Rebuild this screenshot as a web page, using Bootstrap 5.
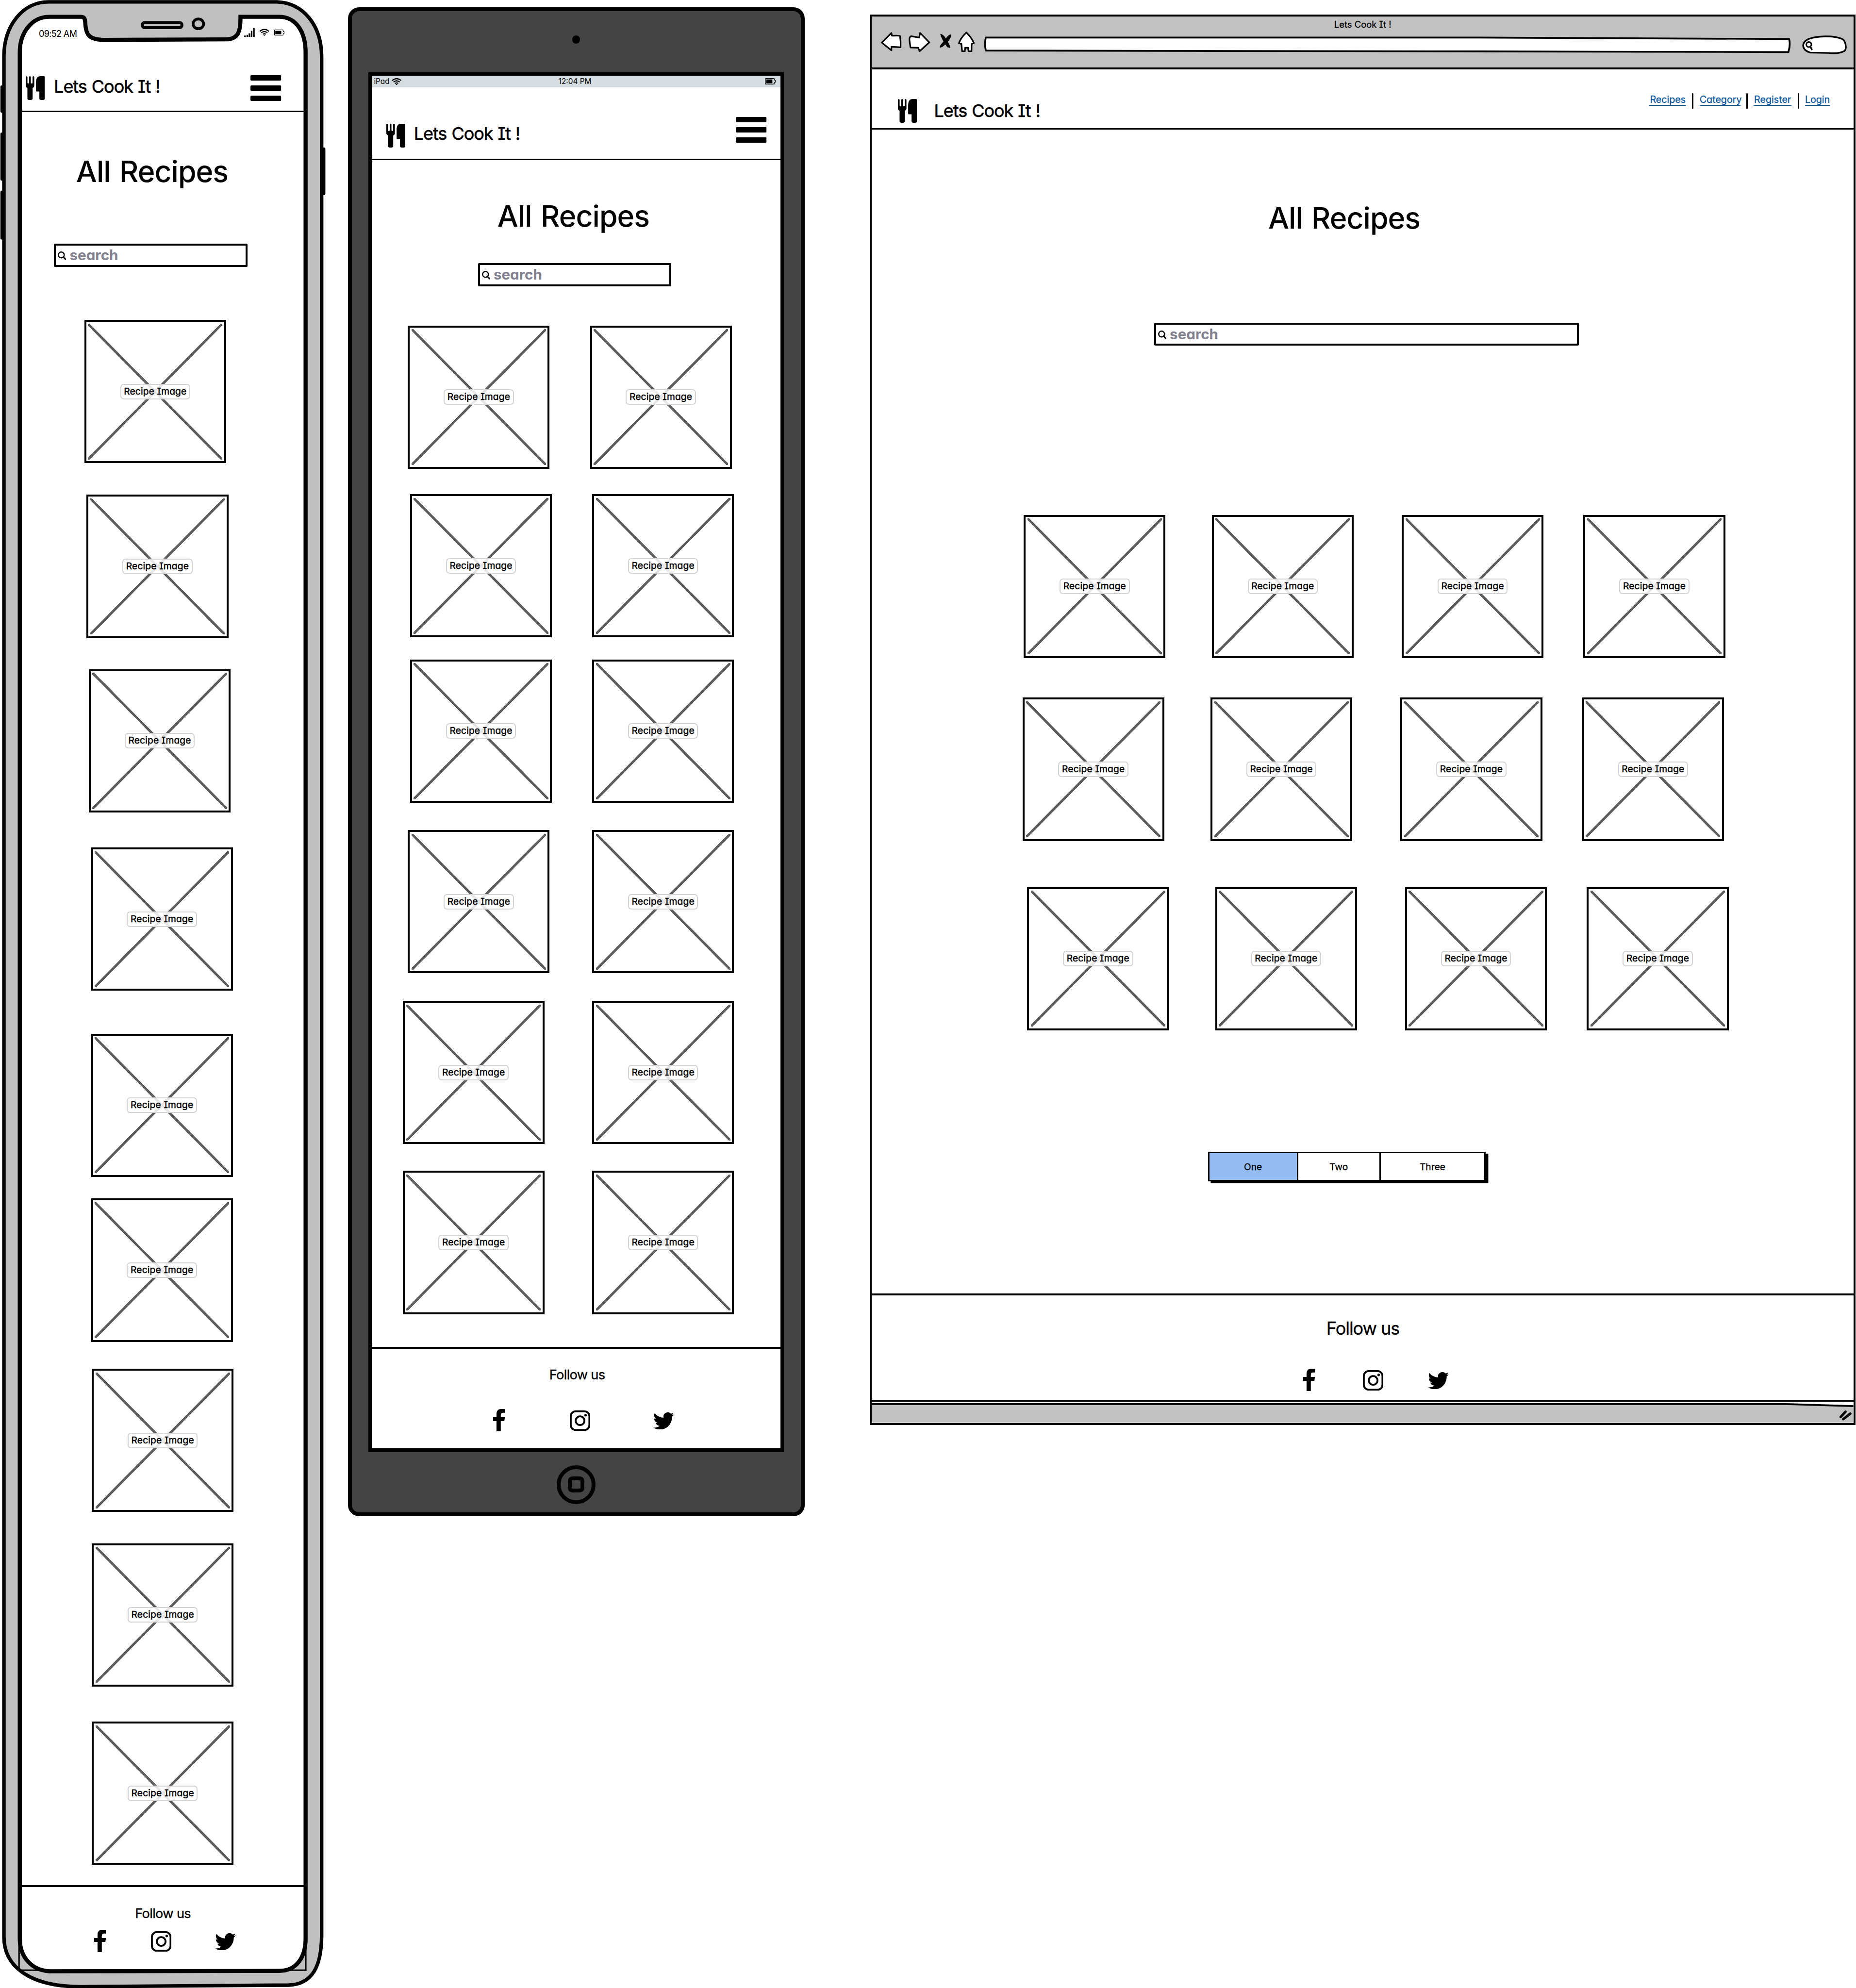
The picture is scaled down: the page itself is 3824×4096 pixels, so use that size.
<!DOCTYPE html>
<html lang="en">
<head>
<meta charset="utf-8">
<title>Lets Cook It ! – wireframes</title>
<link href="https://cdn.jsdelivr.net/npm/bootstrap@5.3.0/dist/css/bootstrap.min.css" rel="stylesheet">
<style>
/* 1rem = 10 canvas units */
html{font-size:7.688px}
body{font-family:Inter,"Open Sans",sans-serif;font-feature-settings:"cv08","cv11";color:#000;background:#fff;line-height:1.21;overflow:hidden;white-space:nowrap}
svg{display:block;flex:none}
.board{width:497.4rem;height:532.8rem}
/* shared wireframe parts */
.site-name{font-size:4.68rem;font-weight:400;letter-spacing:-.13rem;word-spacing:.12rem;-webkit-text-stroke:.08rem #000}
.page-title{font-size:7.9rem;font-weight:500;line-height:9.6rem;height:9.6rem;margin:0;padding-top:.2rem;letter-spacing:-.12rem;word-spacing:.4rem}
.search-box{height:6.2rem;border:4px solid #000;border-radius:.3rem;background:#fff;padding:.25rem 0 0 .5rem}
.search-box svg{width:2.25rem;height:2.3rem;margin-top:1.35rem}
.search-box span{font-size:3.85rem;line-height:4.5rem;font-weight:700;color:#81818f;margin-left:.9rem}
.tile{width:38rem;height:38.4rem;margin:0;flex:none;border:4px solid #000;padding:.45rem;
 background:linear-gradient(to top right,transparent calc(50% - .37rem),#5c5c5c calc(50% - .3rem),#5c5c5c calc(50% + .3rem),transparent calc(50% + .37rem)) content-box,
 linear-gradient(to bottom right,transparent calc(50% - .37rem),#5c5c5c calc(50% - .3rem),#5c5c5c calc(50% + .3rem),transparent calc(50% + .37rem)) content-box}
.tile span{width:18.8rem;height:4.15rem;border:2px solid #d3d3d3;border-radius:.9rem;background:rgba(255,255,255,.85);font-size:2.5rem;line-height:3.55rem;letter-spacing:.02rem;text-align:center;-webkit-text-stroke:.06rem #000}
.burger{width:8.25rem;height:6.9rem}
.cutlery{width:5.1rem;height:6.4rem}
.follow{font-size:3.55rem;line-height:4.3rem;letter-spacing:-.09rem;-webkit-text-stroke:.05rem #000}
.ico-f{width:3.2rem;height:6rem}
.ico-i{width:5.5rem;height:5.5rem;margin-top:.45rem}
.ico-t{width:5.6rem;height:4.6rem;margin-top:.9rem}

/* phone */
.phone{width:87.3rem;height:532.8rem}
.phone .shell{width:87.3rem;height:532.8rem;z-index:0}
.phone .content{z-index:1}
.phone .status{height:20.2rem;padding:7.7rem 11.1rem 0 10.4rem;font-size:2.34rem;letter-spacing:-.08rem}
.phone .status svg{width:10.8rem;height:2.4rem;margin-top:-.2rem}
.phone .top{height:9.9rem;margin:0 5.7rem 0 5.7rem;padding:0 6.2rem 0 1.25rem;border-bottom:.4rem solid #000}
.phone .top .cutlery{margin-top:.2rem}
.phone .top .site-name{margin:.2rem 0 0 2.4rem}
.phone .page-title{margin:10.9rem 0 0 20.4rem}
.phone .search-box{margin:14.7rem 0 0 14.5rem;width:51.8rem}
.phone .tile:nth-child(1){margin:14.25rem 0 0 22.6rem}
.phone .tile:nth-child(2){margin:8.45rem 0 0 23.2rem}
.phone .tile:nth-child(3){margin:8.35rem 0 0 23.8rem}
.phone .tile:nth-child(4){margin:9.4rem 0 0 24.4rem}
.phone .tile:nth-child(5){margin:11.45rem 0 0 24.4rem}
.phone .tile:nth-child(6){margin:5.8rem 0 0 24.4rem}
.phone .tile:nth-child(7){margin:7.25rem 0 0 24.6rem}
.phone .tile:nth-child(8){margin:8.35rem 0 0 24.6rem}
.phone .tile:nth-child(9){margin:9.4rem 0 0 24.6rem}
.phone footer{margin:5.4rem 5.7rem 0;border-top:4px solid #000;padding-top:4.9rem}
.phone .follow{padding-left:30.5rem}
.phone .social{padding:2.25rem 0 0 19.5rem}
.phone .ico-i{margin-left:12rem}.phone .ico-t{margin-left:11.7rem}

/* tablet */
.tablet{width:122.4rem;height:404.4rem;margin:2rem 0 0 5.9rem;border:8px solid #000;border-radius:3rem;background:#444}
.cam{width:2.2rem;height:2.2rem;margin-top:6.5rem;background:#000}
.screen{width:111.4rem;height:369.8rem;margin-top:7.6rem;border:7px solid #000;border-bottom-width:8px;background:#fff}
.tablet .status{height:3.2rem;background:#d5dde0;font-size:2rem;padding:0 1.25rem 0 .6rem}
.tablet .status>*{flex:1 1 0}
.tablet .wifi{width:2.65rem;height:1.9rem;margin-left:.6rem}
.tablet .batt{width:2.9rem;height:1.7rem}
.tablet .top{height:19.5rem;border-bottom:.4rem solid #000;padding:0 3.7rem 0 3.9rem}
.tablet .top .cutlery{margin-bottom:3rem}
.tablet .top .site-name{margin:0 0 3.85rem 2.3rem}
.tablet .top .burger{margin-bottom:4.3rem}
.tablet .page-title{margin:10.1rem 0 0 33.7rem}
.tablet .search-box{margin:7.85rem 0 0 28.5rem;width:51.8rem}
.tablet .tiles-row:nth-child(1){margin:10.55rem 0 0 9.7rem;gap:10.8rem}
.tablet .tiles-row:nth-child(2){margin:6.8rem 0 0 10.3rem;gap:10.8rem}
.tablet .tiles-row:nth-child(3){margin:5.9rem 0 0 10.3rem;gap:10.8rem}
.tablet .tiles-row:nth-child(4){margin:7.3rem 0 0 9.7rem;gap:11.4rem}
.tablet .tiles-row:nth-child(5){margin:7.4rem 0 0 8.3rem;gap:12.8rem}
.tablet .tiles-row:nth-child(6){margin:7.15rem 0 0 8.3rem;gap:12.8rem}
.tablet footer{margin-top:8.75rem;border-top:4px solid #000;padding-top:4.85rem}
.tablet .follow{padding-left:47.6rem}
.tablet .social{padding:7rem 0 0 32.5rem}
.tablet .ico-i{margin-left:17.4rem}.tablet .ico-t{margin-left:16.9rem}
.home-key{width:10.4rem;height:10.4rem;margin-top:3.5rem;border:8px solid #000}
.home-key i{width:4.3rem;height:4.4rem;border:8px solid #000;border-radius:1.2rem}

/* browser */
.browser{width:264.1rem;height:377.95rem;margin:3.9rem 0 0 17.55rem;border:4px solid #000;background:#fff}
.chrome{height:14.2rem;background:#c1c1c1;border-bottom:4px solid #000}
.win-title{font-size:2.4rem;line-height:2.9rem;padding-top:.7rem;height:4rem;text-align:center;-webkit-text-stroke:.04rem #000}
.b-back{width:5.8rem;height:5.6rem;margin-left:2.35rem}
.b-fwd{width:6rem;height:5.6rem;margin-left:1.7rem}
.b-stop{width:3.8rem;height:5rem;margin-left:2rem}
.b-home{width:4.8rem;height:5.6rem;margin-left:1.2rem}
.b-url{width:216.2rem;height:4.5rem;margin-left:2.5rem;margin-top:1.4rem}
.b-find{width:12rem;height:5.1rem;margin-left:2.9rem;margin-top:1.1rem}
.browser .top{height:16.15rem;border-bottom:.4rem solid #000;padding:0 6.4rem 0 6.95rem}
.browser .top .cutlery{margin-top:7.9rem}
.browser .top .site-name{margin:8.26rem 0 0 4.6rem}
.links{margin-top:6.3rem;gap:1.6rem}
.links a{font-size:2.56rem;line-height:2.9rem;height:3.4rem;padding-top:.3rem;color:#08569b;border-bottom:2px solid #08569b;text-align:center;-webkit-text-stroke:.04rem #08569b}
.links i{width:.4rem;height:4.2rem;background:#000;border-radius:.2rem}
.w1{width:9.84rem}.w2{width:10.9rem}.w3{width:10.15rem}.w4{width:6.6rem}
.browser .page-title{margin:18.8rem 0 0 106.2rem}
.browser .search-box{margin:23.3rem 0 0 75.65rem;width:113.75rem}
.browser .tile:nth-child(2){margin-left:12.4rem}
.browser .tile:nth-child(3){margin-left:12.9rem}
.browser .tile:nth-child(4){margin-left:10.7rem}
.browser .tiles-row:nth-child(1){margin:45.3rem 0 0 40.7rem}
.browser .tiles-row:nth-child(2){margin:10.6rem 0 0 40.35rem}
.browser .tiles-row:nth-child(3){margin:12.35rem 0 0 41.6rem}
.pager{margin:32.55rem 0 0 90.05rem;width:74.5rem;height:7.95rem;border:3px solid #000;box-shadow:.7rem .5rem 0 #000;font-size:2.5rem;background:#fff;display:flex}
.pager span{line-height:7.3rem;text-align:center;border-right:3px solid #000;-webkit-text-stroke:.04rem #000}
.pager .p1{width:23.8rem;background:#94bbf2}.pager .p2{width:22.1rem}.pager .p3{flex:1;border:0}
.browser footer{margin-top:30rem;border-top:4px solid #000;padding-top:6.15rem;height:29rem;border-bottom:4px solid #000}
.browser .follow{font-size:4.7rem;line-height:5.7rem;padding-left:121.8rem;letter-spacing:-.14rem}
.browser .social{padding:7.8rem 0 0 115.6rem}
.browser .ico-i{margin-left:12.8rem}.browser .ico-t{margin-left:11.9rem}
.statusbar{margin-top:.5rem;width:263.1rem;height:5.2rem}
</style>
</head>
<body>
<svg width="0" height="0" class="position-absolute">
 <symbol id="cutlery" viewBox="0 0 51 64"><path d="M0 2.5Q0 0 2.3 0T4.6 2.5V17.500Q4.800 19.500 6.800 19.500T9.100 17.500V2.500Q9.100 0 11.400 0T13.700 2.500V17.500Q14 19.500 16 19.500T18.300 17.500V2.500Q18.300 0 20.600 0T22.900 2.500V25Q22.900 29.500 18.500 31.500V59.500Q18.500 64 11.500 64T4.500 59.500V31.500Q0 29.500 0 25Z"/><path d="M51 2.500V59.500Q51 64 43.800 64T36.600 59.500V41H29Q27.500 41 27.500 39.500V14Q28 1 38 0H48.500Q51 0 51 2.500Z"/></symbol>
 <symbol id="burger" viewBox="0 0 82.500 69"><rect width="82.500" height="14.300" rx="3"/><rect y="27.300" width="82.500" height="14.300" rx="3"/><rect y="54.700" width="82.500" height="14.300" rx="3"/></symbol>
 <symbol id="find" viewBox="0 0 22.500 23"><ellipse cx="9.500" cy="9.500" rx="7.800" ry="7.800" fill="none" stroke="#000" stroke-width="3.200"/><path d="M14.500 15L20.500 21" fill="none" stroke="#000" stroke-width="3.800" stroke-linecap="round"/></symbol>
 <symbol id="fb" viewBox="0 0 32 60"><path d="M32 .5V10H26.500Q20.500 10 20.500 16V22H31.500L30 32.500H20.500V60H9V32.500H0V22H9V14Q9 0 22 0Q28 0 32 .5Z"/></symbol>
 <symbol id="ig" viewBox="0 0 55 55"><g fill="none" stroke="#000" stroke-width="5"><rect x="2.500" y="2.500" width="50" height="50" rx="13"/><circle cx="27.500" cy="27.500" r="11.700"/></g><circle cx="42.200" cy="12.800" r="3.400"/></symbol>
 <symbol id="tw" viewBox="0 2 16 13" preserveAspectRatio="none"><path d="M5.026 15c6.038 0 9.341-5.003 9.341-9.334 0-.14 0-.282-.006-.422A6.685 6.685 0 0 0 16 3.542a6.658 6.658 0 0 1-1.889.518 3.301 3.301 0 0 0 1.447-1.817 6.533 6.533 0 0 1-2.087.793A3.286 3.286 0 0 0 7.875 6.030a9.325 9.325 0 0 1-6.767-3.429 3.289 3.289 0 0 0 1.018 4.382A3.323 3.323 0 0 1 .64 6.575v.045a3.288 3.288 0 0 0 2.632 3.218 3.203 3.203 0 0 1-.865.115 3.230 3.230 0 0 1-.614-.057 3.283 3.283 0 0 0 3.067 2.277A6.588 6.588 0 0 1 .78 13.580a6.320 6.320 0 0 1-.78-.045A9.344 9.344 0 0 0 5.026 15z"/></symbol>
 <symbol id="wifi" viewBox="0 0 26.500 19"><g fill="none" stroke="#000" stroke-width="3"><path d="M1 6.500Q13.250 -4 25.500 6.500"/><path d="M5 10.700Q13.250 3.500 21.500 10.700"/><path d="M9 14.500Q13.250 11 17.500 14.500"/></g><path d="M10.800 16.300Q13.250 14.800 15.700 16.300L13.250 19Z"/></symbol>
 <symbol id="batt" viewBox="0 0 29 17"><path d="M2 1H24.500L25.500 5L27.800 6V11L25.500 12L24.500 16H2L1 14V3Z" fill="none" stroke="#000" stroke-width="1.800"/><rect x="3.500" y="3.500" width="16.500" height="10"/></symbol>
</svg>

<div class="board d-flex align-items-start">

 <!-- phone -->
 <section class="phone position-relative flex-shrink-0">
  <svg class="shell position-absolute top-0 start-0" viewBox="0 0 873 5328">
   <rect x="1" y="229" width="12" height="73" rx="4"/><rect x="1" y="355" width="13" height="129" rx="4"/><rect x="1" y="511" width="12" height="131" rx="4"/><rect x="858" y="395" width="14" height="128" rx="4"/>
   <path d="M130 5H742C815 8 861 70 862 150V5190C861 5265 840 5317 775 5320L240 5324C80 5330 10 5270 10.500 5190V150C11 70 60 5 130 5Z" fill="#c0c0c0" stroke="#000" stroke-width="9.500"/>
   <path d="M51 5200V5280H819.500V5200" fill="none" stroke="#000" stroke-width="4"/>
   <path d="M132 45H217C229 45 228 55 229 68C231 92 238 106 278 107L605 105.500C640 105 645 82 644.500 45H748C795 45 819 88 819 140V5195C819 5245 795 5282 748 5282L132 5283C85 5280 53 5245 53 5195V140C53 88 85 45 132 45Z" fill="#fff" stroke="#000" stroke-width="11"/>
   <rect x="381.500" y="60.500" width="106" height="13.500" rx="6" fill="none" stroke="#000" stroke-width="8"/>
   <ellipse cx="531.500" cy="64" rx="14" ry="13" fill="none" stroke="#000" stroke-width="7.500"/>
  </svg>
  <div class="content position-relative">
   <div class="status d-flex align-items-start justify-content-between"><span>09:52 AM</span>
    <svg viewBox="0 0 108 24"><path d="M0 20H4.500V24H0ZM6.300 18H10.600V24H6.300ZM12 14H16.500V24H12ZM18 7H22.200V24H18ZM23.800 0H28.300V24H23.800Z"/><use href="#wifi" x="41" y="2" width="26.500" height="19"/><use href="#batt" x="80" y="3.500" width="28.500" height="16.500"/></svg></div>
   <header class="top d-flex align-items-start"><svg class="cutlery"><use href="#cutlery"/></svg><span class="site-name">Lets Cook It !</span><svg class="burger ms-auto"><use href="#burger"/></svg></header>
   <h1 class="page-title">All Recipes</h1>
   <div class="search-box d-flex align-items-start"><svg><use href="#find"/></svg><span>search</span></div>
   <div class="d-flex flex-column">
    <figure class="tile d-flex align-items-center justify-content-center"><span>Recipe Image</span></figure>
    <figure class="tile d-flex align-items-center justify-content-center"><span>Recipe Image</span></figure>
    <figure class="tile d-flex align-items-center justify-content-center"><span>Recipe Image</span></figure>
    <figure class="tile d-flex align-items-center justify-content-center"><span>Recipe Image</span></figure>
    <figure class="tile d-flex align-items-center justify-content-center"><span>Recipe Image</span></figure>
    <figure class="tile d-flex align-items-center justify-content-center"><span>Recipe Image</span></figure>
    <figure class="tile d-flex align-items-center justify-content-center"><span>Recipe Image</span></figure>
    <figure class="tile d-flex align-items-center justify-content-center"><span>Recipe Image</span></figure>
    <figure class="tile d-flex align-items-center justify-content-center"><span>Recipe Image</span></figure>
   </div>
   <footer><div class="follow">Follow us</div><div class="social d-flex align-items-start"><svg class="ico-f"><use href="#fb"/></svg><svg class="ico-i"><use href="#ig"/></svg><svg class="ico-t"><use href="#tw"/></svg></div></footer>
  </div>
 </section>

 <!-- tablet -->
 <section class="tablet d-flex flex-column align-items-center flex-shrink-0">
  <div class="cam rounded-circle flex-shrink-0"></div>
  <div class="screen flex-shrink-0">
   <div class="status d-flex align-items-center"><div class="d-flex align-items-center"><span>iPad</span><svg class="wifi"><use href="#wifi"/></svg></div><div class="text-center">12:04 PM</div><div class="d-flex justify-content-end"><svg class="batt"><use href="#batt"/></svg></div></div>
   <header class="top d-flex align-items-end"><svg class="cutlery"><use href="#cutlery"/></svg><span class="site-name">Lets Cook It !</span><svg class="burger ms-auto"><use href="#burger"/></svg></header>
   <h1 class="page-title">All Recipes</h1>
   <div class="search-box d-flex align-items-start"><svg><use href="#find"/></svg><span>search</span></div>
   <div>
    <div class="tiles-row d-flex"><figure class="tile d-flex align-items-center justify-content-center"><span>Recipe Image</span></figure><figure class="tile d-flex align-items-center justify-content-center"><span>Recipe Image</span></figure></div>
    <div class="tiles-row d-flex"><figure class="tile d-flex align-items-center justify-content-center"><span>Recipe Image</span></figure><figure class="tile d-flex align-items-center justify-content-center"><span>Recipe Image</span></figure></div>
    <div class="tiles-row d-flex"><figure class="tile d-flex align-items-center justify-content-center"><span>Recipe Image</span></figure><figure class="tile d-flex align-items-center justify-content-center"><span>Recipe Image</span></figure></div>
    <div class="tiles-row d-flex"><figure class="tile d-flex align-items-center justify-content-center"><span>Recipe Image</span></figure><figure class="tile d-flex align-items-center justify-content-center"><span>Recipe Image</span></figure></div>
    <div class="tiles-row d-flex"><figure class="tile d-flex align-items-center justify-content-center"><span>Recipe Image</span></figure><figure class="tile d-flex align-items-center justify-content-center"><span>Recipe Image</span></figure></div>
    <div class="tiles-row d-flex"><figure class="tile d-flex align-items-center justify-content-center"><span>Recipe Image</span></figure><figure class="tile d-flex align-items-center justify-content-center"><span>Recipe Image</span></figure></div>
   </div>
   <footer><div class="follow">Follow us</div><div class="social d-flex align-items-start"><svg class="ico-f"><use href="#fb"/></svg><svg class="ico-i"><use href="#ig"/></svg><svg class="ico-t"><use href="#tw"/></svg></div></footer>
  </div>
  <div class="home-key rounded-circle d-flex align-items-center justify-content-center flex-shrink-0"><i></i></div>
 </section>

 <!-- desktop browser -->
 <section class="browser flex-shrink-0">
  <div class="chrome">
   <div class="win-title">Lets Cook It !</div>
   <div class="d-flex align-items-start">
    <svg class="b-back" viewBox="0 0 58 56"><path d="M3.600 29.700L29.500 3.700L31 11.300Q52 10 52.500 12Q55 28 54 42L29.500 40.700V50.300Z" fill="#fff" stroke="#000" stroke-width="4.200" stroke-linejoin="round"/></svg>
    <svg class="b-fwd" viewBox="0 0 60 56"><path d="M55.500 29L30.800 3.700L28.500 16L7 12.500Q1 14 2.700 26L5 42.700L25.600 43.300L29.700 52.700Z" fill="#fff" stroke="#000" stroke-width="4.200" stroke-linejoin="round"/></svg>
    <svg class="b-stop" viewBox="0 0 38 50"><path d="M4 6Q14 8 20 20Q32 38 31 44L23 42Q8 22 4 6ZM34 8Q34 18 22 30Q10 44 3 43Q2 36 16 24Q26 6 34 8Z"/></svg>
    <svg class="b-home" viewBox="0 0 48 56"><path d="M24.800 2.500Q40 18 45 31L39 33.300L38.600 52.700H30.500L29.400 43.300H21.400L20.800 52.700H13.300L11.600 33.300L4.700 31.300Q9 18 24.800 2.500Z" fill="#fff" stroke="#000" stroke-width="4.200" stroke-linejoin="round"/></svg>
    <svg class="b-url" viewBox="0 0 2162 45"><path d="M4 3L1300 3L2157 7Q2161 22 2155 42L1200 40L4 38Q0 20 4 3Z" fill="#fff" stroke="#000" stroke-width="4.800" stroke-linejoin="round"/></svg>
    <svg class="b-find" viewBox="0 0 120 51"><path d="M62 2.500Q90 2 106 9Q115 12 117 28Q118 38 113 42Q98 50 70 47L22 46Q2 40 2.800 25Q6 4 62 2.500Z" fill="#fff" stroke="#000" stroke-width="4.500"/><circle cx="18" cy="24.500" r="6.800" fill="none" stroke="#000" stroke-width="4"/><path d="M22 30L26 37.500" stroke="#000" stroke-width="4.500" stroke-linecap="round"/></svg>
   </div>
  </div>
  <header class="top d-flex align-items-start"><svg class="cutlery"><use href="#cutlery"/></svg><span class="site-name">Lets Cook It !</span>
   <nav class="links d-flex align-items-start ms-auto"><a class="w1 text-decoration-none">Recipes</a><i></i><a class="w2 text-decoration-none">Category</a><i></i><a class="w3 text-decoration-none">Register</a><i></i><a class="w4 text-decoration-none">Login</a></nav></header>
  <h1 class="page-title">All Recipes</h1>
  <div class="search-box d-flex align-items-start"><svg><use href="#find"/></svg><span>search</span></div>
  <div>
   <div class="tiles-row d-flex"><figure class="tile d-flex align-items-center justify-content-center"><span>Recipe Image</span></figure><figure class="tile d-flex align-items-center justify-content-center"><span>Recipe Image</span></figure><figure class="tile d-flex align-items-center justify-content-center"><span>Recipe Image</span></figure><figure class="tile d-flex align-items-center justify-content-center"><span>Recipe Image</span></figure></div>
   <div class="tiles-row d-flex"><figure class="tile d-flex align-items-center justify-content-center"><span>Recipe Image</span></figure><figure class="tile d-flex align-items-center justify-content-center"><span>Recipe Image</span></figure><figure class="tile d-flex align-items-center justify-content-center"><span>Recipe Image</span></figure><figure class="tile d-flex align-items-center justify-content-center"><span>Recipe Image</span></figure></div>
   <div class="tiles-row d-flex"><figure class="tile d-flex align-items-center justify-content-center"><span>Recipe Image</span></figure><figure class="tile d-flex align-items-center justify-content-center"><span>Recipe Image</span></figure><figure class="tile d-flex align-items-center justify-content-center"><span>Recipe Image</span></figure><figure class="tile d-flex align-items-center justify-content-center"><span>Recipe Image</span></figure></div>
  </div>
  <div class="pager"><span class="p1">One</span><span class="p2">Two</span><span class="p3">Three</span></div>
  <footer><div class="follow">Follow us</div><div class="social d-flex align-items-start"><svg class="ico-f"><use href="#fb"/></svg><svg class="ico-i"><use href="#ig"/></svg><svg class="ico-t"><use href="#tw"/></svg></div></footer>
  <svg class="statusbar" viewBox="0 0 2631 52"><path d="M0 2.500H2450L2631 8V52H0Z" fill="#c1c1c1"/><path d="M0 2.500H2450L2631 8" fill="none" stroke="#000" stroke-width="5"/><path d="M2597 37L2610 23M2604 43L2623 28" stroke="#000" stroke-width="6.500" stroke-linecap="round"/></svg>
 </section>
</div>
<script src="https://cdn.jsdelivr.net/npm/bootstrap@5.3.0/dist/js/bootstrap.bundle.min.js"></script>
</body>
</html>
